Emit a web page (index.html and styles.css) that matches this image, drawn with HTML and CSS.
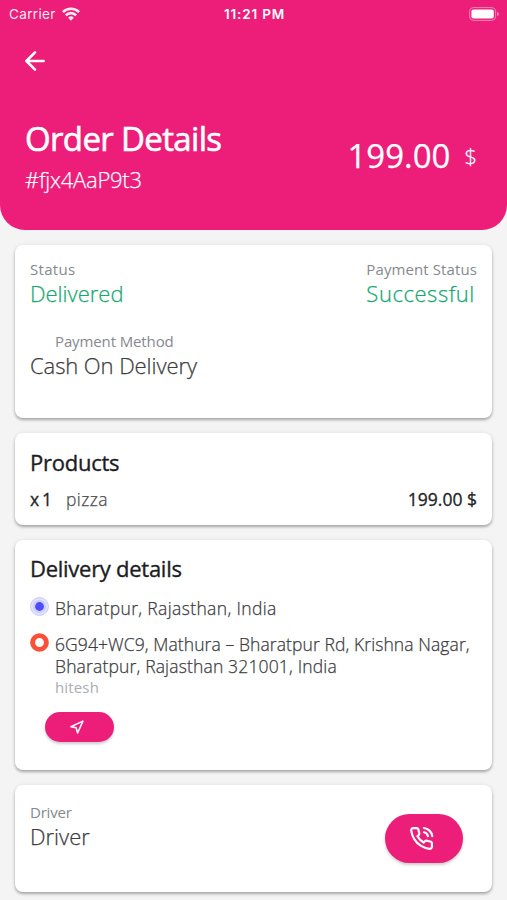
FILE: index.html
```html
<!DOCTYPE html>
<html lang="en">
<head>
<meta charset="utf-8">
<title>Order Details</title>
<link rel="stylesheet" href="styles.css">
</head>
<body>
<header class="hero">
  <div class="statusbar">
    <div class="carrier"><span>Carrier</span>
      <svg width="18" height="14" viewBox="0 0 18 14" fill="none" stroke="#fff" stroke-width="2.6"><path d="M.9 5.1a11.5 11.5 0 0 1 16.2 0M3.8 8.3a7.4 7.4 0 0 1 10.4 0"/><path d="M9 13.7 6.1 10.8a4.1 4.1 0 0 1 5.8 0Z" fill="#fff" stroke="none"/></svg>
    </div>
    <span class="time">11:21 PM</span>
    <svg class="battery" width="31" height="14" viewBox="0 0 31 14"><rect x=".6" y=".6" width="26" height="12.8" rx="3.8" fill="none" stroke="#fff" stroke-opacity=".45"/><rect x="2.4" y="2.4" width="22.4" height="9.2" rx="2" fill="#fff"/><path d="M28 5v4q2-.7 2-2t-2-2Z" fill="#fff" fill-opacity=".5"/></svg>
  </div>
  <svg class="back" width="20" height="20" viewBox="0 0 20 20" fill="none" stroke="#fff" stroke-width="2.6" stroke-linecap="round" stroke-linejoin="round"><path d="M18.6 10H1.6M10 1.4 1.4 10l8.6 8.6"/></svg>
  <div class="summary">
    <div>
      <h1 class="title">Order Details</h1>
      <p class="order-id">#fjx4AaP9t3</p>
    </div>
    <div class="total"><span class="amount">199.00</span><span class="currency">$</span></div>
  </div>
</header>
<main class="cards">
  <section class="card card-status">
    <div class="row">
      <div><p class="label l-status">Status</p><p class="value good">Delivered</p></div>
      <div><p class="label l-paystatus">Payment Status</p><p class="value good v-success">Successful</p></div>
    </div>
    <div class="method"><p class="label indent l-method">Payment Method</p><p class="value v-cash">Cash On Delivery</p></div>
  </section>
  <section class="card card-products">
    <h2 class="heading h-products">Products</h2>
    <div class="row product"><span class="qty">x 1</span><span class="item">pizza</span><span class="price">199.00 $</span></div>
  </section>
  <section class="card card-delivery">
    <h2 class="heading h-delivery">Delivery details</h2>
    <div class="place from">
      <svg width="19" height="19" viewBox="0 0 19 19"><circle cx="9.5" cy="9.5" r="9" fill="#e0e0fc" stroke="#ccccf6"/><circle cx="9.5" cy="9.5" r="6.5" fill="#cdcdfb"/><circle cx="9.5" cy="9.5" r="4.4" fill="#4d4dfa"/></svg>
      <p class="address a1">Bharatpur, Rajasthan, India</p>
    </div>
    <div class="place to">
      <svg width="19" height="19" viewBox="0 0 19 19"><circle cx="9.5" cy="9.5" r="6.9" fill="#fff" stroke="#fb4f38" stroke-width="4.9"/></svg>
      <div><p class="address a2">6G94+WC9, Mathura – Bharatpur Rd, Krishna Nagar,</p><p class="address a3">Bharatpur, Rajasthan 321001, India</p><p class="person">hitesh</p></div>
    </div>
    <button class="pill navigate" aria-label="Navigate"><svg width="14" height="14" viewBox="0 0 14 14" fill="none" stroke="#fff" stroke-width="1.5" stroke-linejoin="round"><path d="M12.9 1.1.9 6.7l5.2 1.1 1.5 5.2Z"/></svg></button>
  </section>
  <section class="card card-driver">
    <div><p class="label l-driver">Driver</p><p class="value">Driver</p></div>
    <button class="pill call" aria-label="Call"><svg width="25" height="25" viewBox="0 0 24 24" fill="none" stroke="#fff" stroke-width="2.1" stroke-linecap="round" stroke-linejoin="round"><path d="M14.3 6A5 5 0 0 1 18.2 9.8M14.3 1.9A9 9 0 0 1 22.3 9.8m-.3 7.12v3a2 2 0 0 1-2.18 2 19.79 19.79 0 0 1-8.63-3.07 19.5 19.5 0 0 1-6-6 19.79 19.79 0 0 1-3.07-8.67A2 2 0 0 1 4.11 2h3a2 2 0 0 1 2 1.72 12.84 12.84 0 0 0 .7 2.81 2 2 0 0 1-.45 2.11L8.09 9.91a16 16 0 0 0 6 6l1.27-1.27a2 2 0 0 1 2.11-.45 12.84 12.84 0 0 0 2.81.7A2 2 0 0 1 22 16.92z"/></svg></button>
  </section>
</main>
</body>
</html>
```

FILE: styles.css
```css
* { box-sizing: border-box; }
body { margin: 0; height: 900px; overflow: hidden; background: #f4f4f4; color: #3c3c3e; font-family: "Open Sans", "Noto Sans", sans-serif; font-weight: 300; -webkit-text-stroke: .25px currentColor; }
p, h1, h2 { margin: 0; white-space: nowrap; }
span { white-space: nowrap; }
svg { display: block; flex: none; }

.hero { height: 230px; background: #ec1e79; color: #fff; border-radius: 0 0 25px 25px; }
.statusbar { height: 27px; padding: 0 7px 0 9px; display: grid; grid-template-columns: 1fr auto 1fr; align-items: center; font-family: Inter, sans-serif; font-size: 13.5px; -webkit-text-stroke: 0; }
.carrier { display: flex; align-items: center; gap: 6px; font-weight: 400; letter-spacing: .35px; opacity: .9; }
.time { font-weight: 600; letter-spacing: .85px; }
.battery { justify-self: end; }
.back { margin: 24px 0 0 25px; }
.summary { display: flex; justify-content: space-between; padding: 45px 30px 0 25px; }
.title { font-size: 33px; line-height: 46px; font-weight: 400; letter-spacing: -.65px; -webkit-text-stroke-width: .6px; }
.order-id { font-size: 22px; line-height: 30px; margin-top: 2px; letter-spacing: -.25px; }
.total { display: flex; align-items: center; gap: 14px; height: 46px; margin-top: 16px; }
.amount { font-size: 33px; font-weight: 400; }
.currency { font-size: 22px; }

.cards { padding: 15px 15px 0; display: flex; flex-direction: column; gap: 15px; }
.card { background: #fff; border-radius: 8px; padding: 0 15px; box-shadow: 0 2px 3px rgba(0,0,0,.3), 0 0 5px rgba(0,0,0,.06); }
.row { display: flex; justify-content: space-between; }
.label { font-size: 15px; line-height: 20px; color: #85898f; font-weight: 400; -webkit-text-stroke: 0; }
.l-status { letter-spacing: .3px; }
.l-paystatus { letter-spacing: .1px; }
.l-method { letter-spacing: -.12px; }
.l-driver { letter-spacing: -.2px; }
.value { font-size: 22px; line-height: 30px; margin-top: -1px; }
.v-success { letter-spacing: .55px; }
.v-cash { letter-spacing: -.08px; }
.good { color: #16a870; }
.heading { font-size: 22px; line-height: 30px; font-weight: 400; color: #1d1d1f; -webkit-text-stroke-width: .35px; }
.h-products { letter-spacing: -.25px; }
.h-delivery { letter-spacing: -.27px; }
.card-status { height: 173px; padding-top: 14px; }
.method { margin-top: 23px; }
.indent { margin-left: 25px; }
.card-products { height: 92px; padding-top: 14px; }
.product { margin-top: 10px; font-size: 17.5px; line-height: 24px; }
.qty { font-weight: 400; color: #242426; letter-spacing: -.9px; -webkit-text-stroke-width: .3px; }
.item { margin: 0 auto 0 15px; color: #4c4c4e; letter-spacing: .4px; }
.price { font-weight: 400; color: #242426; -webkit-text-stroke-width: .3px; }
.card-delivery { height: 230px; padding-top: 13px; }
.place { display: flex; gap: 6px; }
.address { font-size: 17.5px; line-height: 22px; color: #3c3c3e; }
.a1 { letter-spacing: .36px; }
.a2 { letter-spacing: .09px; }
.a3 { letter-spacing: .16px; }
.from { margin-top: 14px; }
.to { margin-top: 14px; }
.person { font-size: 15px; line-height: 20px; color: #a9aeb3; font-weight: 400; letter-spacing: .15px; -webkit-text-stroke: 0; }
.pill { display: flex; align-items: center; justify-content: center; border: 0; padding: 0; background: #ec1e79; box-shadow: 0 2px 3px rgba(0,0,0,.2); }
.navigate { width: 69px; height: 30px; border-radius: 15px; margin: 15px 0 0 15px; padding: 0 6px 1px 0; }
.card-driver { height: 107px; padding: 17px 29px 0 15px; display: flex; justify-content: space-between; }
.call { width: 78px; height: 49px; border-radius: 24.5px; margin-top: 12px; padding-right: 6px; }
```
